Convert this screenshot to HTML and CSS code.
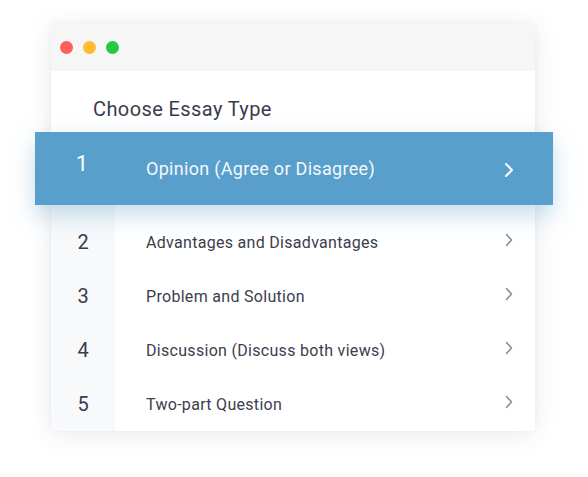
FILE: index.html
```html
<!DOCTYPE html>
<html>
<head>
<meta charset="utf-8">
<link rel="stylesheet" href="styles.css">
</head>
<body>
<div class="window">
  <div class="titlebar">
    <span class="dot red"></span>
    <span class="dot yellow"></span>
    <span class="dot green"></span>
  </div>
  <h1 class="title">Choose Essay Type</h1>
  <div class="active">
    <span class="num">1</span>
    <span class="label">Opinion (Agree or Disagree)</span>
    <svg class="chev" width="10" height="16" viewBox="0 0 10 16"><path d="M2 2 L8 8 L2 14" fill="none" stroke="#fff" stroke-width="2" stroke-linecap="round" stroke-linejoin="round"/></svg>
  </div>
  <div class="list">
    <div class="row"><span class="num">2</span><span class="label">Advantages and Disadvantages</span><svg class="chev" width="8" height="14" viewBox="0 0 8 14"><path d="M1.5 1.5 L6.5 7 L1.5 12.5" fill="none" stroke="#8a8a92" stroke-width="1.5" stroke-linecap="round" stroke-linejoin="round"/></svg></div>
    <div class="row"><span class="num">3</span><span class="label">Problem and Solution</span><svg class="chev" width="8" height="14" viewBox="0 0 8 14"><path d="M1.5 1.5 L6.5 7 L1.5 12.5" fill="none" stroke="#8a8a92" stroke-width="1.5" stroke-linecap="round" stroke-linejoin="round"/></svg></div>
    <div class="row"><span class="num">4</span><span class="label">Discussion (Discuss both views)</span><svg class="chev" width="8" height="14" viewBox="0 0 8 14"><path d="M1.5 1.5 L6.5 7 L1.5 12.5" fill="none" stroke="#8a8a92" stroke-width="1.5" stroke-linecap="round" stroke-linejoin="round"/></svg></div>
    <div class="row"><span class="num">5</span><span class="label">Two-part Question</span><svg class="chev" width="8" height="14" viewBox="0 0 8 14"><path d="M1.5 1.5 L6.5 7 L1.5 12.5" fill="none" stroke="#8a8a92" stroke-width="1.5" stroke-linecap="round" stroke-linejoin="round"/></svg></div>
  </div>
</div>
</body>
</html>
```
FILE: styles.css
```css
html, body {
  margin: 0;
  padding: 0;
  background: #fff;
  width: 588px;
  height: 477px;
  overflow: hidden;
}
body {
  font-family: Roboto, "Liberation Sans", sans-serif;
  padding-top: 23px;
}
.window {
  margin-left: 51px;
  width: 484px;
  height: 407px;
  background: #fff;
  border-radius: 3px;
  box-shadow: 0 4px 24px rgba(40, 60, 90, 0.10), 0 0 6px rgba(40, 60, 90, 0.05);
}
.titlebar {
  height: 48px;
  background: #f5f6f5;
  border-radius: 3px 3px 0 0;
  display: flex;
  align-items: center;
  gap: 10px;
  padding-left: 9px;
}
.dot {
  width: 13px;
  height: 13px;
  border-radius: 50%;
  display: block;
}
.red { background: #ff5f57; }
.yellow { background: #febc2e; }
.green { background: #28c840; }
.title {
  margin: 0;
  height: 61px;
  box-sizing: border-box;
  padding: 26px 0 0 42px;
  font-size: 20px;
  font-weight: 400;
  color: #3b3b4c;
  letter-spacing: 0.4px;
}
.active {
  position: relative;
  margin: 0 -18px 0 -16px;
  height: 73px;
  background: #589fcb;
  box-shadow: 0 10px 22px rgba(88, 159, 203, 0.35);
  display: flex;
  align-items: center;
  color: #fff;
}
.active .num {
  width: 93px;
  text-align: center;
  font-size: 22px;
  margin-top: -11px;
  box-sizing: border-box;
  padding-left: 1px;
}
.active .label {
  flex: 1;
  font-size: 18px;
  padding-left: 18px;
  letter-spacing: 0.3px;
  color: #f4f8fb;
}
.active .chev {
  margin-right: 39px;
  margin-top: 2px;
}
.list {
  padding-top: 10px;
  height: 216px;
  background: linear-gradient(to right, #f8f9fa 64px, #fff 64px);
  border-radius: 0 0 3px 3px;
}
.row {
  height: 54px;
  display: flex;
  align-items: center;
}
.row .num {
  width: 64px;
  text-align: center;
  font-size: 20px;
  color: #3b3b4c;
}
.row .label {
  flex: 1;
  padding-left: 31px;
  font-size: 16px;
  color: #3d3d4e;
  letter-spacing: 0.3px;
}
.row .chev {
  margin-right: 22px;
  margin-top: -4px;
}
```
